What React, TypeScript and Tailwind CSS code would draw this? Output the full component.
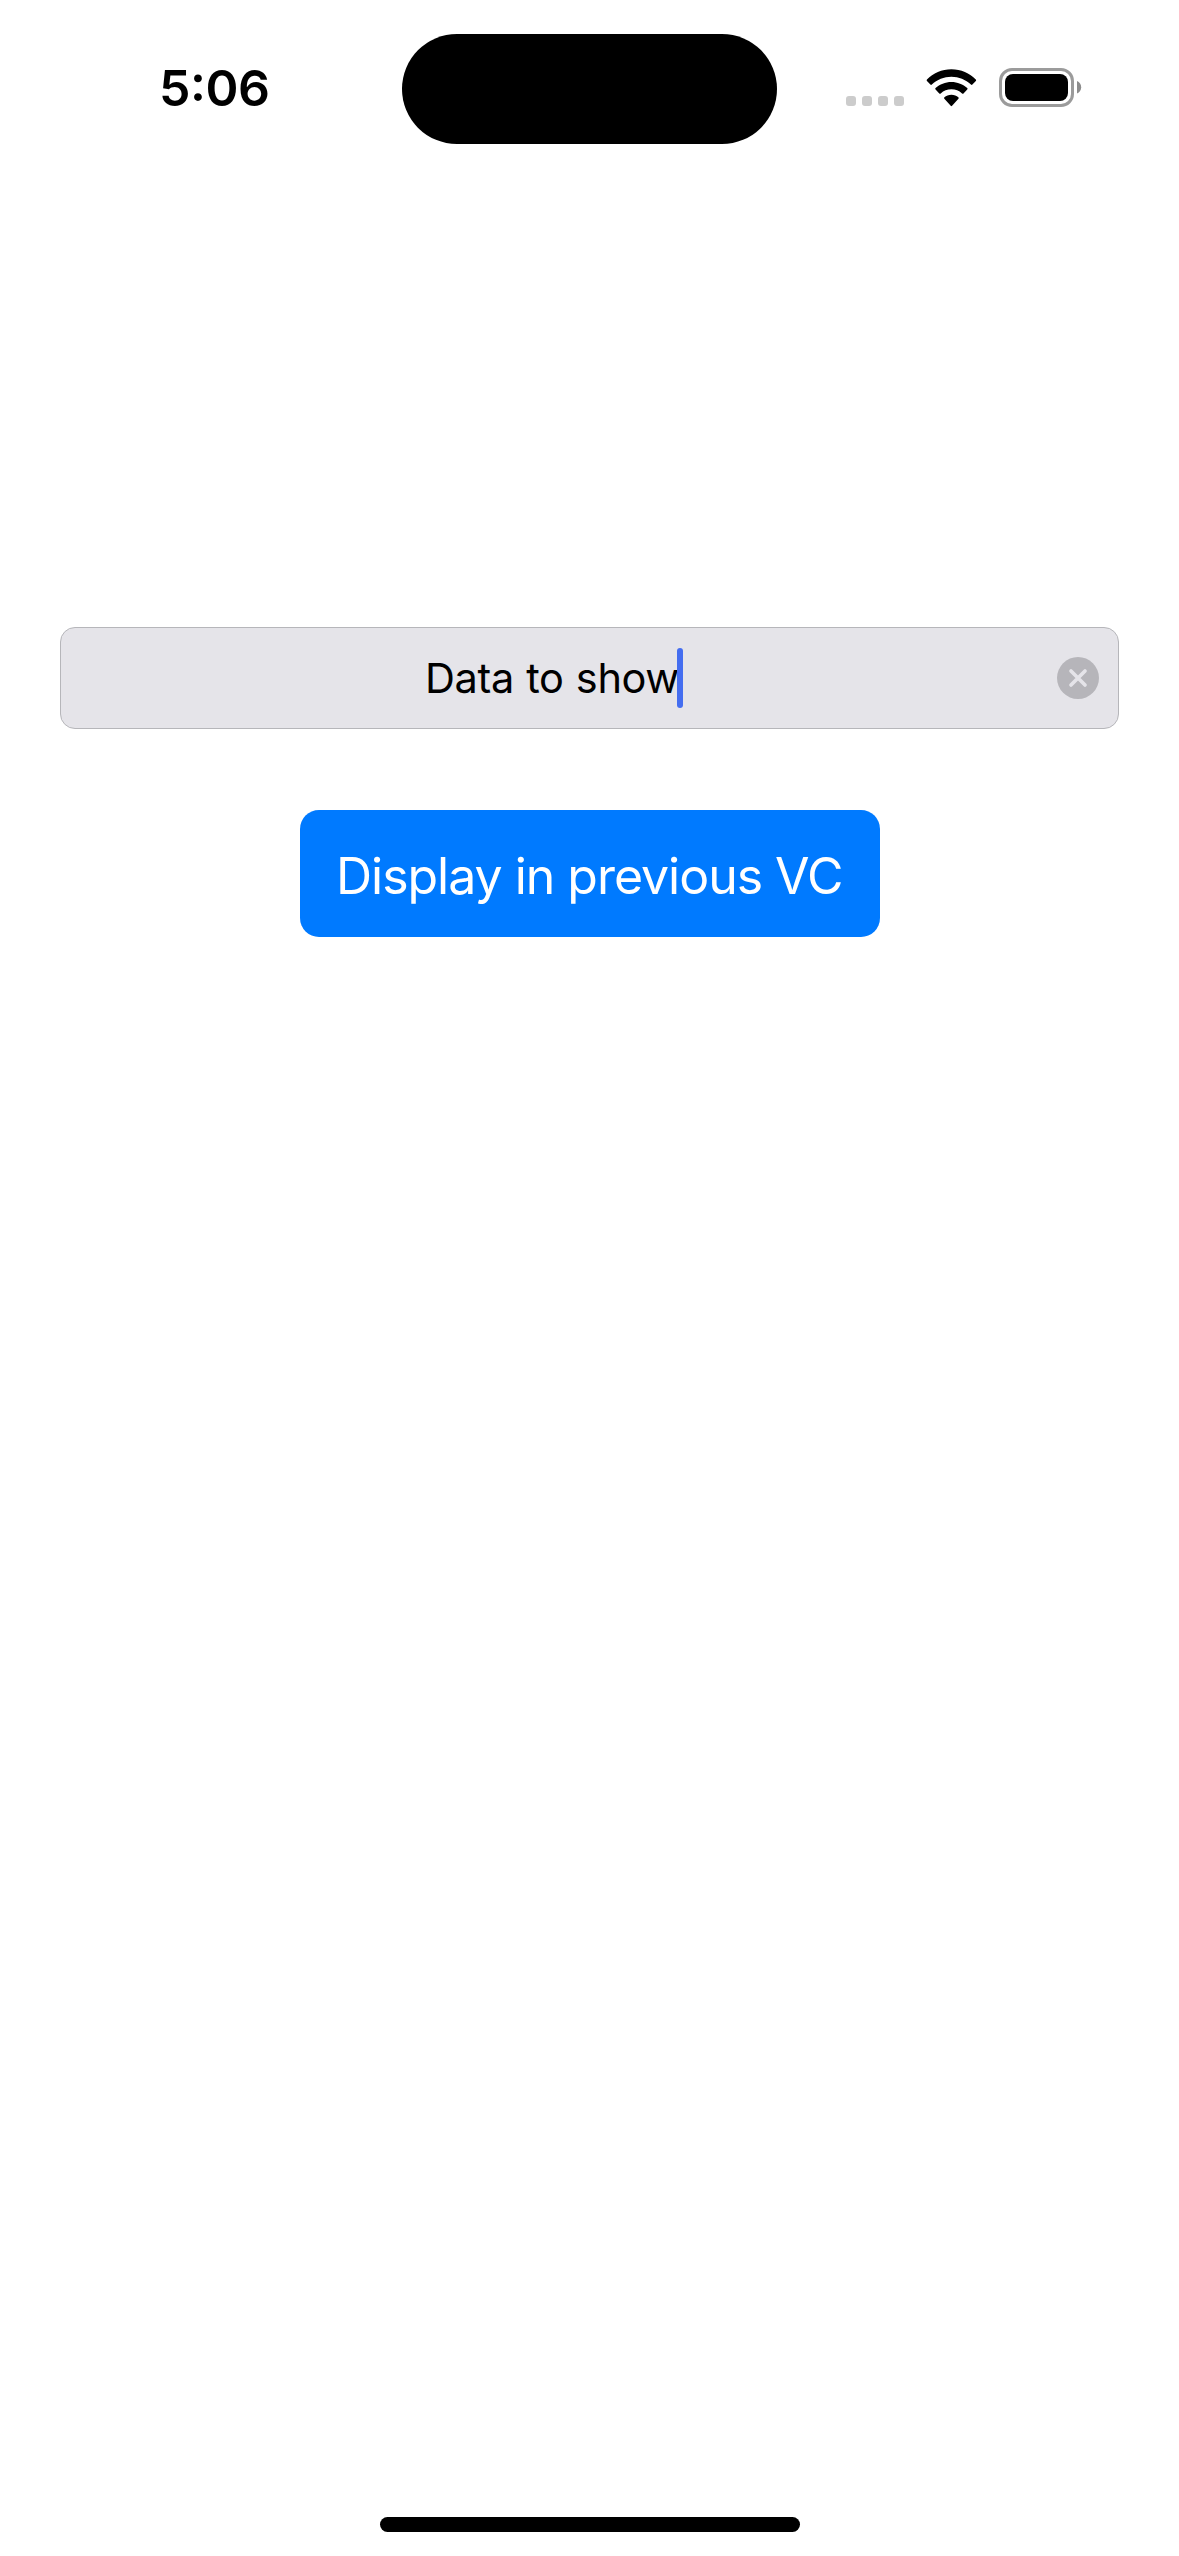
import React from "react";

function SignalDots() {
  return (
    <div className="mt-[96px] ml-[69px] flex shrink-0 gap-[6px]">
      {[0, 1, 2, 3].map((i) => (
        <span key={i} className="size-[10px] rounded-[3px] bg-[#cccccc]" />
      ))}
    </div>
  );
}

function WifiIcon() {
  return (
    <svg
      className="mt-[68px] ml-[21px] h-[40px] w-[52px] shrink-0"
      viewBox="-1 -.4 53.2 40"
      preserveAspectRatio="none"
      fill="black"
    >
      <path d="M26 .8C35.8 .8 44.700 4.600 51 11.200Q51.700 12 51 12.700L47.500 16.200Q46.800 16.900 46 16.200C40.600 11.300 33.600 8.400 26 8.400C18.400 8.400 11.400 11.300 6 16.200Q5.200 16.900 4.500 16.200L1 12.700Q.3 12 1 11.200C7.300 4.600 16.200 .8 26 .8Z" />
      <path d="M26 13.500C32.200 13.500 38 15.800 42.200 19.700Q43 20.400 42.200 21.200L38.400 25Q37.700 25.700 36.900 25C33.900 22.400 30.200 20.900 26 20.900C21.800 20.900 18.100 22.400 15.100 25Q14.300 25.700 13.600 25L9.800 21.200Q9 20.400 9.800 19.700C14 15.800 19.800 13.500 26 13.500Z" />
      <path d="M26 26.300C28.800 26.300 31.400 27.200 33.100 28.800Q34 29.600 33.200 30.400L26.700 37.400Q26 38.100 25.300 37.400L18.800 30.400Q18 29.600 18.900 28.800C20.600 27.200 23.200 26.300 26 26.300Z" />
    </svg>
  );
}

function BatteryIcon() {
  return (
    <svg className="mt-[68px] ml-[22px] h-[39px] w-[83px] shrink-0" viewBox="0 0 83 39">
      <rect x="1.500" y="1.500" width="72" height="36" rx="11.500" fill="none" stroke="#9b9b9b" strokeWidth="3" />
      <rect x="6" y="6" width="63" height="27" rx="8" fill="black" />
      <path d="M78 13C80.600 14 82.200 16.400 82.200 19.200C82.200 22 80.600 24.400 78 25.400Z" fill="#8c8c8c" />
    </svg>
  );
}

function StatusBar() {
  return (
    <header className="flex h-[177px] shrink-0 items-start">
      <div className="w-[402px] shrink-0 pt-[58px] pl-[159px] text-[50px] leading-[60px] font-[570] tracking-[-0.500px]">
        5<span className="align-[5px] leading-[40px]">:</span>06
      </div>
      <div className="mt-[34px] h-[110px] w-[375px] shrink-0 rounded-full bg-black" />
      <SignalDots />
      <WifiIcon />
      <BatteryIcon />
    </header>
  );
}

function TextField() {
  return (
    <div className="mx-[60px] mt-[450px] flex h-[102px] w-[1059px] shrink-0 items-center rounded-[15px] border border-[#b6b6ba] bg-[#e5e4e9]">
      <span className="ml-[364px] w-[252px] text-[41.500px] leading-[60px] tracking-[-0.360px] whitespace-nowrap [word-spacing:1px]">
        Data to show
      </span>
      <span className="h-[60px] w-[6px] rounded-[3px] bg-[#446df0]" />
      <button className="mr-[19px] ml-auto" aria-label="Clear text">
        <svg className="block size-[42px]" viewBox="0 0 42 42">
          <circle cx="21" cy="21" r="21" fill="#b6b5ba" />
          <path d="M14 14L28 28M28 14L14 28" stroke="#e5e4e9" strokeWidth="3.700" strokeLinecap="round" />
        </svg>
      </button>
    </div>
  );
}

export default function App() {
  return (
    <main className="flex h-[2556px] w-[1179px] flex-col overflow-hidden bg-white font-['Inter',sans-serif] text-black">
      <StatusBar />
      <TextField />
      <button className="mt-[81px] ml-[300px] flex h-[127px] w-[580px] shrink-0 items-center rounded-[19px] bg-[#007aff] pt-[4px] pl-[36px] text-left text-[50px] leading-[60px] tracking-[-1.020px] whitespace-nowrap text-white">
        Display in previous VC
      </button>
      <div className="mt-auto mb-[24px] ml-[380px] h-[15px] w-[420px] shrink-0 rounded-full bg-black" />
    </main>
  );
}
